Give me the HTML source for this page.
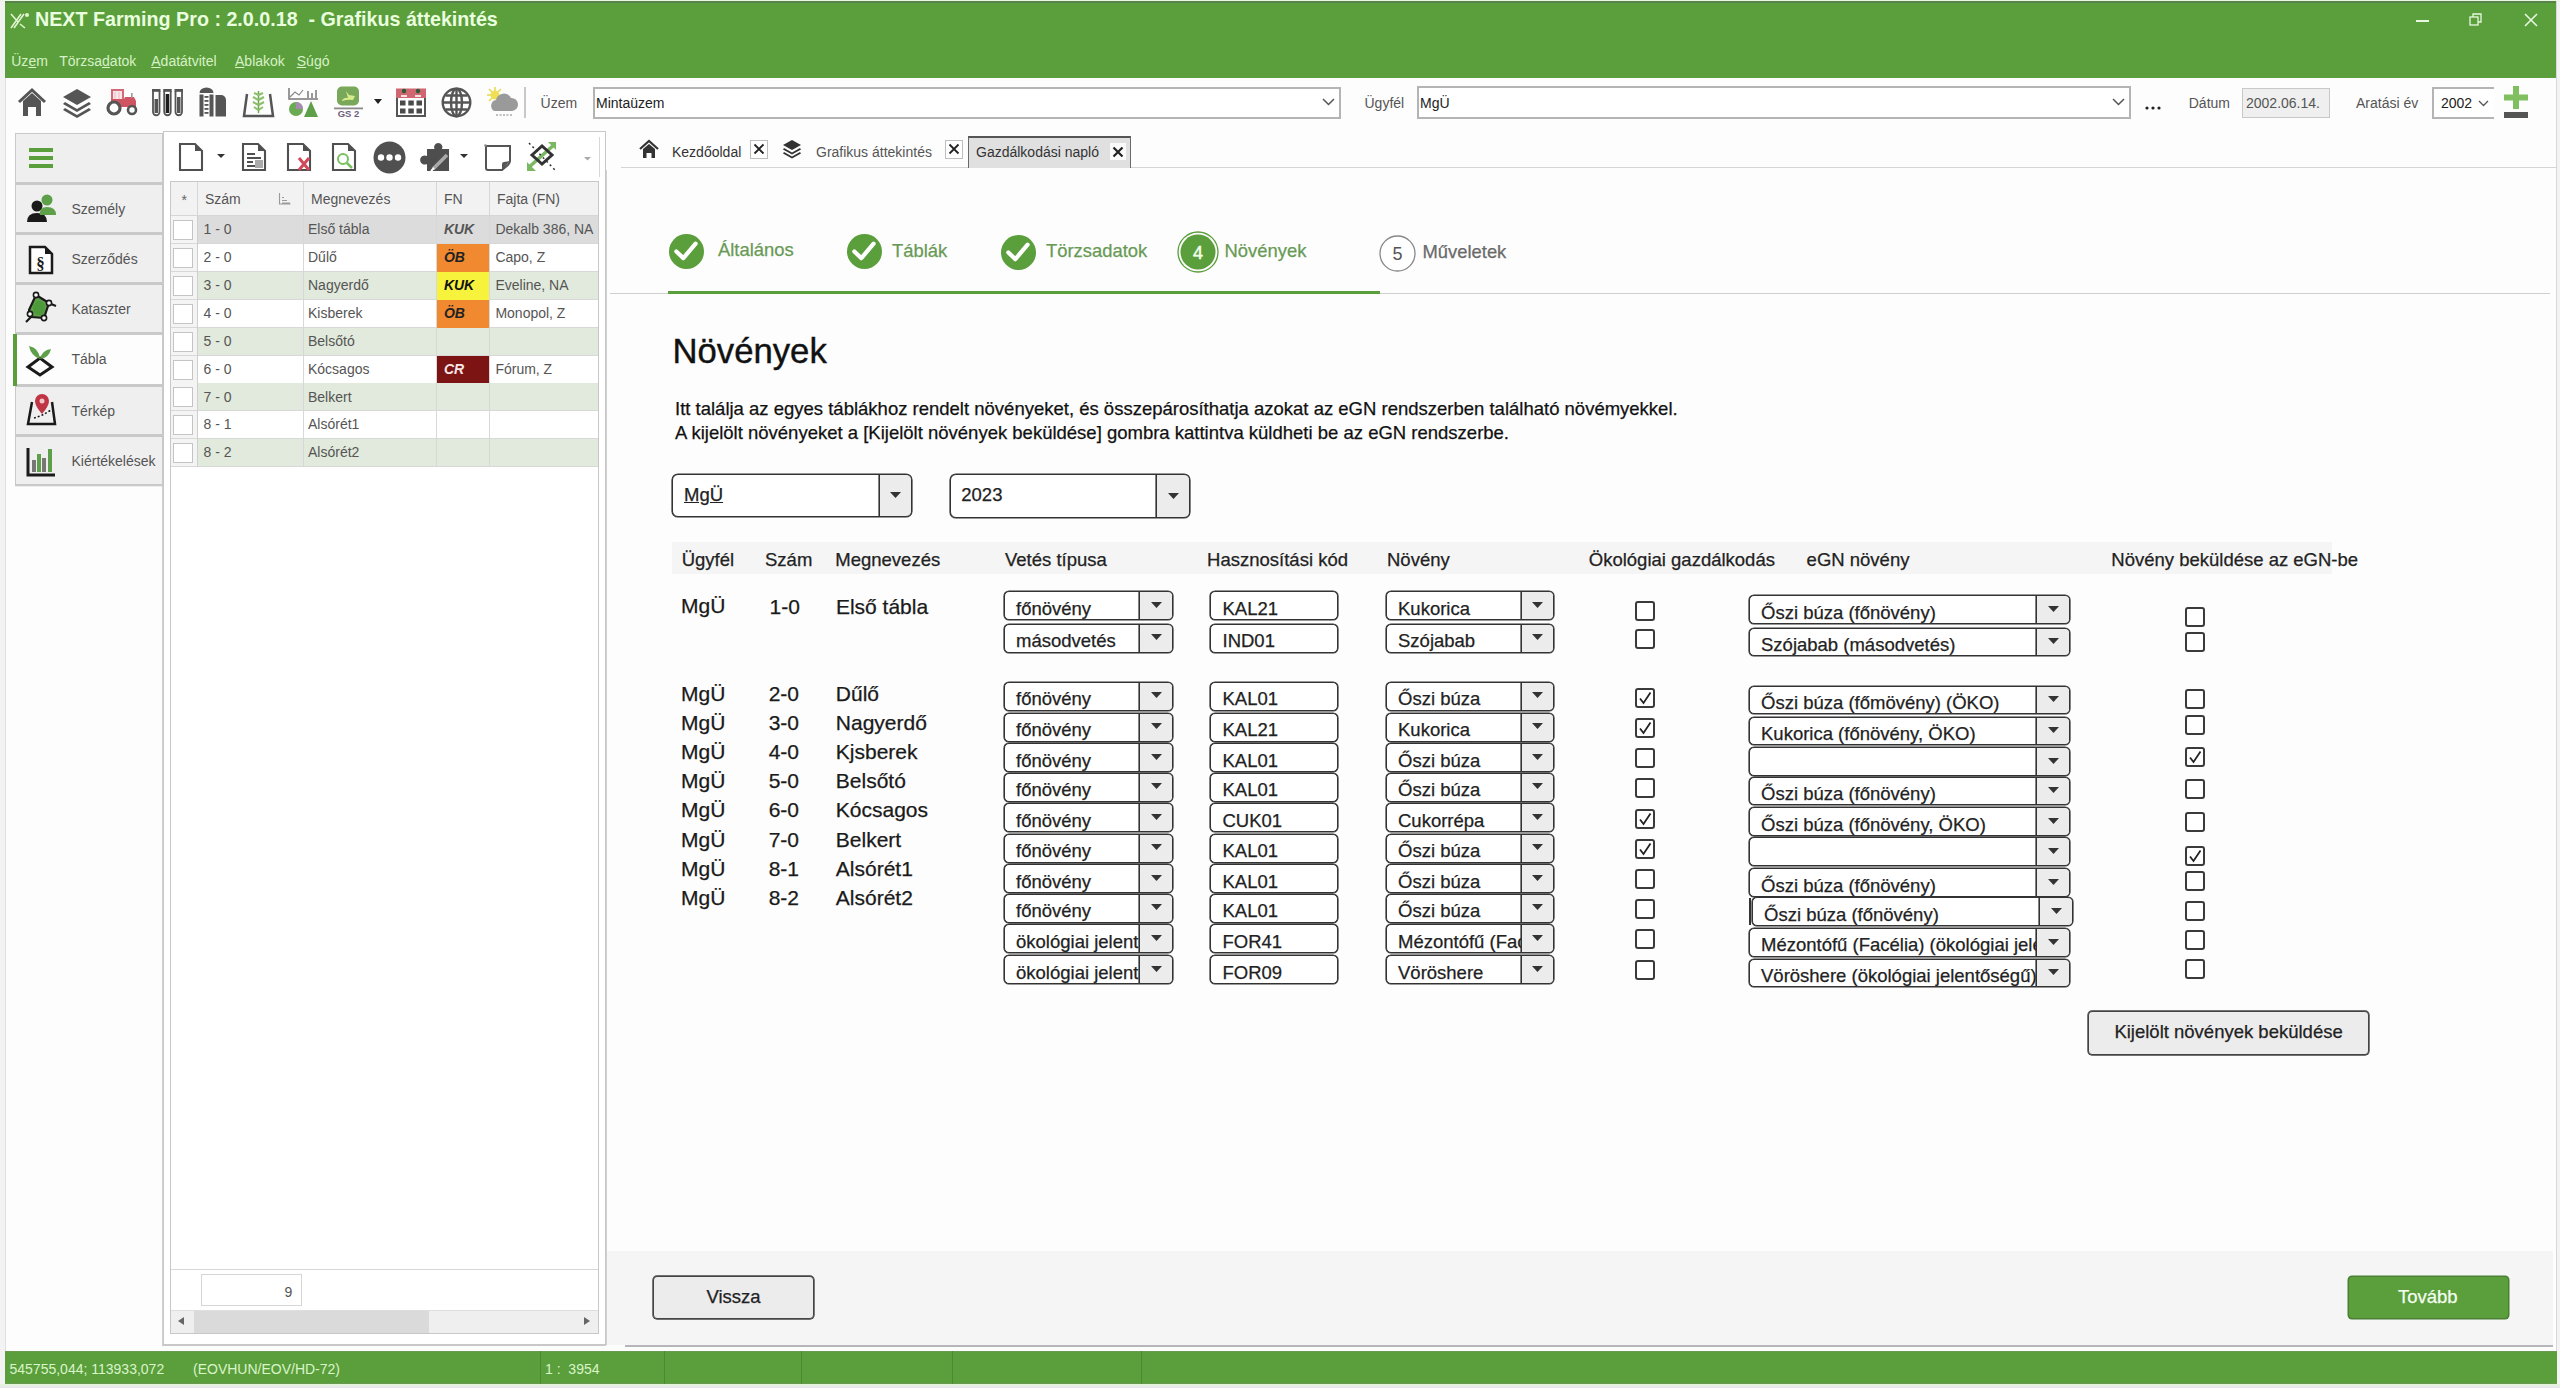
<!DOCTYPE html>
<html><head><meta charset="utf-8"><style>
html,body{margin:0;padding:0;width:2560px;height:1388px;overflow:hidden;background:#fdfdfd;position:relative}
.t{position:absolute;white-space:pre;line-height:1;font-family:"Liberation Sans",sans-serif}
.h{-webkit-text-stroke:0.25px currentColor}
svg{overflow:visible}
</style></head><body>
<div style="position:absolute;left:0px;top:0px;width:6px;height:1388px;background:#f3f3f3"></div>
<div style="position:absolute;left:5px;top:0px;width:1px;height:1388px;background:#e0e0e0"></div>
<div style="position:absolute;left:2556px;top:0px;width:4px;height:1388px;background:#f3f3f3"></div>
<div style="position:absolute;left:2556px;top:0px;width:1px;height:1388px;background:#d8d8d8"></div>
<div style="position:absolute;left:0px;top:0px;width:2560px;height:1px;background:#eaf8e2"></div>
<div style="position:absolute;left:5px;top:1px;width:2551px;height:77px;background:#5b9e3c;border-top:2px solid #57824a;box-sizing:border-box"></div>
<svg style="position:absolute;left:9px;top:11px" width="22" height="18" viewBox="0 0 22 18"><path d="M2 17 L12 3 M5 17 L15 3 M2 3 L9 11 M11 13 L16 17" stroke="#dff5d0" stroke-width="1.6" fill="none"/><circle cx="18" cy="4" r="2" fill="#dff5d0"/></svg>
<div class="t " style="left:35px;top:9.62px;font-size:19.7px;color:#eaffdf;font-weight:700;">NEXT Farming Pro : 2.0.0.18&nbsp; - Grafikus áttekintés</div>
<div class="t " style="left:11.25px;top:53.65px;font-size:14px;color:#d6f2c6;font-weight:400;">Üz<u>e</u>m</div>
<div class="t " style="left:59.25px;top:53.65px;font-size:14px;color:#d6f2c6;font-weight:400;">Törzsa<u>d</u>atok</div>
<div class="t " style="left:151.25px;top:53.65px;font-size:14px;color:#d6f2c6;font-weight:400;"><u>A</u>datátvitel</div>
<div class="t " style="left:235px;top:53.65px;font-size:14px;color:#d6f2c6;font-weight:400;"><u>A</u>blakok</div>
<div class="t " style="left:296.75px;top:53.65px;font-size:14px;color:#d6f2c6;font-weight:400;"><u>S</u>úgó</div>
<div style="position:absolute;left:2416px;top:20px;width:13px;height:1.5px;background:#e8f8e0"></div>
<svg style="position:absolute;left:2469px;top:13px" width="14" height="14" viewBox="0 0 14 14"><rect x="1" y="4" width="8" height="8" fill="none" stroke="#e8f8e0" stroke-width="1.3"/><path d="M4 4 V1 H12 V9 H9" fill="none" stroke="#e8f8e0" stroke-width="1.3"/></svg>
<svg style="position:absolute;left:2524px;top:13px" width="14" height="14" viewBox="0 0 14 14"><path d="M1 1 L13 13 M13 1 L1 13" stroke="#e8f8e0" stroke-width="1.6"/></svg>
<svg style="position:absolute;left:17px;top:87px" width="30" height="30" viewBox="0 0 30 30"><path d="M2 15 L15 3 L28 15" fill="none" stroke="#555" stroke-width="3"/><path d="M6 14 L15 6 L24 14 V29 H19 V20 H11 V29 H6 Z" fill="#555"/></svg>
<svg style="position:absolute;left:62px;top:88px" width="30" height="30" viewBox="0 0 30 30"><path d="M15 1 L29 9 L15 17 L1 9 Z" fill="#555"/><path d="M3 14 L15 21 L27 14 L29 16 L15 24 L1 16 Z" fill="#555"/><path d="M3 20 L15 27 L27 20 L29 22 L15 30 L1 22 Z" fill="#555"/></svg>
<svg style="position:absolute;left:106px;top:88px" width="32" height="28" viewBox="0 0 32 28"><path d="M6 2 H17 V12 H6 Z" fill="#f8e6e8" stroke="#d46a76" stroke-width="2"/><path d="M9 4 V11 M13 4 V11" stroke="#f3c9ce" stroke-width="1.5"/><path d="M5 11 H18 L19 9 H28 L30 13 V19 H5Z" fill="#cf5563"/><rect x="25" y="5" width="1.6" height="5" fill="#999"/><circle cx="8" cy="20" r="6" fill="#fff" stroke="#555" stroke-width="3.2"/><circle cx="26" cy="22" r="4" fill="#fff" stroke="#555" stroke-width="2.6"/></svg>
<svg style="position:absolute;left:151px;top:88px" width="33" height="29" viewBox="0 0 33 29"><g fill="#555"><rect x="1" y="1" width="8.5" height="2.8"/><rect x="12.2" y="1" width="8.5" height="2.8"/><rect x="23.5" y="1" width="8.5" height="2.8"/></g><g fill="none" stroke="#555" stroke-width="1.8"><path d="M2 3 V24 A3.2 3.2 0 0 0 8.5 24 V3"/><path d="M13.2 3 V24 A3.2 3.2 0 0 0 19.7 24 V3"/><path d="M24.5 3 V24 A3.2 3.2 0 0 0 31 24 V3"/></g><rect x="3.5" y="11" width="3.5" height="14" fill="#555"/><rect x="14.7" y="6" width="3.5" height="19" fill="#1e1e1e"/><rect x="26" y="9" width="3.5" height="16" fill="#555"/></svg>
<svg style="position:absolute;left:199px;top:87px" width="28" height="30" viewBox="0 0 28 30"><path d="M0.5 6 A7 5.5 0 0 1 14.5 6 Z" fill="#555"/><rect x="0.5" y="7.5" width="4" height="22" fill="#555"/><rect x="10.5" y="7.5" width="4" height="22" fill="#555"/><g fill="#555"><rect x="5.5" y="9" width="4" height="1.8"/><rect x="5.5" y="13" width="4" height="1.8"/><rect x="5.5" y="17" width="4" height="1.8"/><rect x="5.5" y="21" width="4" height="1.8"/><rect x="5.5" y="25" width="4" height="1.8"/></g><path d="M16.5 8 H22 A5 5 0 0 1 27 13 V29.5 H16.5Z" fill="#555"/></svg>
<svg style="position:absolute;left:243px;top:87px" width="31" height="30" viewBox="0 0 31 30"><path d="M4 7 L1 29 H30 L27 7" fill="none" stroke="#555" stroke-width="2.5"/><path d="M15.5 4 V26" stroke="#6aa84f" stroke-width="1.5"/><path d="M15.5 8 L11 6 M15.5 8 L20 6 M15.5 13 L10 10 M15.5 13 L21 10 M15.5 18 L10 15 M15.5 18 L21 15 M15.5 23 L11 20 M15.5 23 L20 20" stroke="#8bbf6a" stroke-width="2"/></svg>
<svg style="position:absolute;left:288px;top:87px" width="31" height="31" viewBox="0 0 31 31"><path d="M1 1 V12 H30" fill="none" stroke="#777" stroke-width="1.5"/><path d="M2 10 L7 5 L11 8 L15 3" fill="none" stroke="#888" stroke-width="1.2"/><rect x="19" y="4" width="2" height="8" fill="#999"/><rect x="23" y="6" width="2" height="6" fill="#999"/><rect x="27" y="3" width="2" height="9" fill="#999"/><circle cx="8" cy="22" r="7" fill="#6aaa52"/><path d="M8 22 V15 A7 7 0 0 1 15 22Z" fill="#a88bb0"/><path d="M23 14 L30 30 H16Z" fill="#5ea04a"/></svg>
<svg style="position:absolute;left:333px;top:86px" width="32" height="33" viewBox="0 0 32 33"><rect x="4" y="0.5" width="22" height="19" rx="5" fill="#7aa85a"/><path d="M9 14 Q12 11 15 12 L13 5 L16 9 L22 10 L20 14 Q15 13 9 15Z" fill="#d7eb8a"/><rect x="1" y="21.5" width="29" height="1.8" fill="#8a8a8a"/><text x="15.5" y="31" font-family="Liberation Sans" font-size="9.5" font-weight="700" text-anchor="middle" fill="#6d5f7d">GS 2</text></svg>
<svg style="position:absolute;left:374px;top:99px" width="8" height="5" viewBox="0 0 8 5"><path d="M0 0 H8 L4 5Z" fill="#222"/></svg>
<svg style="position:absolute;left:395px;top:86px" width="32" height="32" viewBox="0 0 32 32"><rect x="2" y="4" width="28" height="26" fill="#fff" stroke="#555" stroke-width="2"/><rect x="1" y="2.5" width="30" height="9.5" fill="#cf6670"/><rect x="6" y="9" width="6" height="2" fill="#f6e0e2"/><rect x="20" y="9" width="6" height="2" fill="#f6e0e2"/><circle cx="9" cy="5" r="2.2" fill="#2f5a3a"/><circle cx="23" cy="5" r="2.2" fill="#2f5a3a"/><g fill="#4a4a4a"><rect x="5" y="14.5" width="5.5" height="5"/><rect x="13.3" y="14.5" width="5.5" height="5"/><rect x="21.5" y="14.5" width="5.5" height="5"/><rect x="5" y="22.5" width="5.5" height="5"/><rect x="13.3" y="22.5" width="5.5" height="5"/><rect x="21.5" y="22.5" width="5.5" height="5"/></g></svg>
<svg style="position:absolute;left:441px;top:87px" width="31" height="31" viewBox="0 0 31 31"><g fill="none" stroke="#555" stroke-width="2.4"><circle cx="15.5" cy="15.5" r="13.8"/><ellipse cx="15.5" cy="15.5" rx="5.5" ry="13.8"/><path d="M15.5 2 V29 M2 15.5 H29 M4.5 8.5 H26.5 M4.5 22.5 H26.5"/></g></svg>
<svg style="position:absolute;left:486px;top:86px" width="31" height="32" viewBox="0 0 31 32"><g stroke="#e8d84a" stroke-width="1.5"><path d="M9 1 V5 M1 9 H5 M3 3 L6 6 M15 3 L12 6 M3 15 L6 12"/></g><circle cx="9" cy="9" r="4.5" fill="#eedf55"/><path d="M8 25 A6 6 0 0 1 10 14 A8 8 0 0 1 25 12 A6 6 0 0 1 26 25 Z" fill="#9a9a9a"/><path d="M10 29 H26" stroke="#aaa" stroke-width="1.5" stroke-dasharray="2 1.5"/></svg>
<div style="position:absolute;left:524px;top:87px;width:2px;height:31px;background:#c8c8c8"></div>
<div class="t " style="left:540.6px;top:95.55px;font-size:14px;color:#555;font-weight:400;">Üzem</div>
<div style="position:absolute;left:593px;top:87px;width:748px;height:32px;border:2px solid #b4b4b4;box-sizing:border-box;background:#fff"></div>
<div class="t " style="left:596px;top:95.55px;font-size:14px;color:#222;font-weight:400;">Mintaüzem</div>
<svg style="position:absolute;left:1322px;top:98px" width="13" height="8" viewBox="0 0 13 8"><path d="M1 1 L6.5 6.5 L12 1" fill="none" stroke="#555" stroke-width="1.5"/></svg>
<div class="t " style="left:1364.5px;top:95.55px;font-size:14px;color:#555;font-weight:400;">Ügyfél</div>
<div style="position:absolute;left:1417px;top:86px;width:714px;height:33px;border:2px solid #b4b4b4;box-sizing:border-box;background:#fff"></div>
<div class="t " style="left:1420px;top:95.55px;font-size:14px;color:#222;font-weight:400;">MgÜ</div>
<svg style="position:absolute;left:2112px;top:98px" width="13" height="8" viewBox="0 0 13 8"><path d="M1 1 L6.5 6.5 L12 1" fill="none" stroke="#555" stroke-width="1.5"/></svg>
<svg style="position:absolute;left:2145px;top:106px" width="16" height="4" viewBox="0 0 16 4"><circle cx="2" cy="2" r="1.6" fill="#222"/><circle cx="8" cy="2" r="1.6" fill="#222"/><circle cx="14" cy="2" r="1.6" fill="#222"/></svg>
<div class="t " style="left:2188.75px;top:95.55px;font-size:14px;color:#555;font-weight:400;">Dátum</div>
<div style="position:absolute;left:2242px;top:88px;width:88px;height:30px;border:1px solid #c8c8c8;box-sizing:border-box;background:#efefef"></div>
<div class="t " style="left:2246px;top:95.55px;font-size:14px;color:#555;font-weight:400;">2002.06.14.</div>
<div class="t " style="left:2356px;top:95.55px;font-size:14px;color:#555;font-weight:400;">Aratási év</div>
<div style="position:absolute;left:2432px;top:87px;width:62px;height:32px;border:2px solid #b4b4b4;border-right:none;box-sizing:border-box;background:#fff"></div>
<div class="t " style="left:2441px;top:95.55px;font-size:14px;color:#222;font-weight:400;">2002</div>
<svg style="position:absolute;left:2478px;top:100px" width="11" height="7" viewBox="0 0 11 7"><path d="M1 1 L5.5 5.5 L10 1" fill="none" stroke="#555" stroke-width="1.3"/></svg>
<svg style="position:absolute;left:2503px;top:85px" width="26" height="34" viewBox="0 0 26 34"><path d="M13 1 V24 M1 12.5 H25" stroke="#7fbf60" stroke-width="6"/><rect x="1" y="27" width="24" height="6" fill="#555"/></svg>
<div style="position:absolute;left:15px;top:133px;width:148px;height:354px;background:#efefef"></div>
<div style="position:absolute;left:15px;top:133px;width:148px;height:51px;background:#efefef;border:1px solid #c9c9c9;border-bottom:2px solid #c9c9c9;box-sizing:border-box"></div>
<div style="position:absolute;left:15px;top:184px;width:148px;height:50px;background:#efefef;border:1px solid #c9c9c9;border-bottom:2px solid #c9c9c9;box-sizing:border-box"></div>
<div class="t " style="left:71.5px;top:201.65px;font-size:14px;color:#555;font-weight:400;">Személy</div>
<div style="position:absolute;left:15px;top:234px;width:148px;height:50px;background:#efefef;border:1px solid #c9c9c9;border-bottom:2px solid #c9c9c9;box-sizing:border-box"></div>
<div class="t " style="left:71.5px;top:251.65px;font-size:14px;color:#555;font-weight:400;">Szerződés</div>
<div style="position:absolute;left:15px;top:284px;width:148px;height:50px;background:#efefef;border:1px solid #c9c9c9;border-bottom:2px solid #c9c9c9;box-sizing:border-box"></div>
<div class="t " style="left:71.5px;top:301.65px;font-size:14px;color:#555;font-weight:400;">Kataszter</div>
<div style="position:absolute;left:15px;top:334px;width:148px;height:52px;background:#fdfdfd;border:1px solid #c9c9c9;border-bottom:2px solid #c9c9c9;box-sizing:border-box"></div>
<div class="t " style="left:71.5px;top:351.65px;font-size:14px;color:#555;font-weight:400;">Tábla</div>
<div style="position:absolute;left:15px;top:386px;width:148px;height:50px;background:#efefef;border:1px solid #c9c9c9;border-bottom:2px solid #c9c9c9;box-sizing:border-box"></div>
<div class="t " style="left:71.5px;top:403.65px;font-size:14px;color:#555;font-weight:400;">Térkép</div>
<div style="position:absolute;left:15px;top:436px;width:148px;height:50px;background:#efefef;border:1px solid #c9c9c9;border-bottom:2px solid #c9c9c9;box-sizing:border-box"></div>
<div class="t " style="left:71.5px;top:453.65px;font-size:14px;color:#555;font-weight:400;">Kiértékelések</div>
<div style="position:absolute;left:13px;top:334px;width:4px;height:52px;background:#5b9e3c"></div>
<div style="position:absolute;left:29px;top:148px;width:24px;height:4px;background:#5b9e3c"></div>
<div style="position:absolute;left:29px;top:156px;width:24px;height:4px;background:#5b9e3c"></div>
<div style="position:absolute;left:29px;top:164px;width:24px;height:4px;background:#5b9e3c"></div>
<svg style="position:absolute;left:26px;top:193px" width="31" height="30" viewBox="0 0 31 30"><circle cx="11" cy="13" r="5.5" fill="#1a1a1a"/><path d="M1 29 Q1 20 11 20 Q21 20 21 29Z" fill="#1a1a1a"/><circle cx="21" cy="7" r="5.5" fill="#5ea04a"/><path d="M14 22 Q13 14 21 14 Q30 14 30 22Z" fill="#5ea04a"/></svg>
<svg style="position:absolute;left:28px;top:245px" width="26" height="30" viewBox="0 0 26 30"><path d="M2 2 H17 L24 9 V28 H2 Z" fill="#fff" stroke="#1a1a1a" stroke-width="2.5"/><path d="M17 2 L24 9 H17Z" fill="#1a1a1a"/><text x="12.5" y="24" font-family="Liberation Serif" font-size="17" font-weight="700" text-anchor="middle" fill="#1a1a1a">§</text></svg>
<svg style="position:absolute;left:24px;top:291px" width="34" height="34" viewBox="0 0 34 34"><path d="M2 31 L7 26 M27 13 L32 15" stroke="#1a1a1a" stroke-width="2.2"/><path d="M12 4 L25 12 L20 27 L7 26 L5 19Z" fill="#5ea04a" stroke="#1a1a1a" stroke-width="2.2" stroke-linejoin="round"/><ellipse cx="15" cy="17" rx="6" ry="7" fill="#4c9a3a"/><g fill="#fff" stroke="#1a1a1a" stroke-width="1.6"><circle cx="12" cy="4" r="2.6"/><circle cx="25" cy="12" r="2.6"/><circle cx="20" cy="27" r="2.6"/><circle cx="6" cy="23" r="2.6"/></g></svg>
<svg style="position:absolute;left:25px;top:344px" width="30" height="32" viewBox="0 0 30 32"><path d="M3 23 L15 14 L27 23 L15 31 Z" fill="none" stroke="#1a1a1a" stroke-width="3"/><path d="M15 15 Q6 12 4 2 Q14 4 15 15Z" fill="#5ea04a"/><path d="M15 15 Q17 6 26 5 Q24 14 15 15Z" fill="#5ea04a"/></svg>
<svg style="position:absolute;left:26px;top:394px" width="30" height="32" viewBox="0 0 30 32"><path d="M6 8 L2 30 H29 L26 8" fill="none" stroke="#1a1a1a" stroke-width="2.5"/><path d="M8 24 Q16 22 25 16" fill="none" stroke="#1a1a1a" stroke-width="1.5" stroke-dasharray="2 2"/><path d="M16 20 Q9 12 9 7 A7 7 0 0 1 23 7 Q23 12 16 20Z" fill="#c03545"/><circle cx="16" cy="7" r="2.5" fill="#f2c4c8"/></svg>
<svg style="position:absolute;left:26px;top:446px" width="30" height="32" viewBox="0 0 30 32"><path d="M2 2 V29 H29" fill="none" stroke="#1a1a1a" stroke-width="3"/><rect x="6" y="14" width="4" height="12" fill="#777"/><rect x="11" y="8" width="4" height="18" fill="#5ea04a"/><rect x="16" y="12" width="4" height="14" fill="#777"/><rect x="22" y="3" width="4" height="23" fill="#5ea04a"/></svg>
<div style="position:absolute;left:162px;top:486px;width:1px;height:860px;background:#d0d0d0"></div>
<div style="position:absolute;left:163px;top:131px;width:443px;height:1215px;border:1px solid #c8c8c8;border-bottom:2px solid #c8c8c8;box-sizing:border-box;background:#fff"></div>
<svg style="position:absolute;left:178px;top:142px" width="26" height="30" viewBox="0 0 26 30"><path d="M2 2 H17 L24 9 V28 H2 Z" fill="#fff" stroke="#505050" stroke-width="2.1"/><path d="M17 2 L24 9 H17Z" fill="#505050"/></svg>
<svg style="position:absolute;left:216px;top:153px" width="10" height="6" viewBox="0 0 10 6"><path d="M1 1 H9 L5 5Z" fill="#333"/></svg>
<svg style="position:absolute;left:241px;top:142px" width="26" height="30" viewBox="0 0 26 30"><path d="M2 2 H17 L24 9 V28 H2 Z" fill="#fff" stroke="#505050" stroke-width="2.1"/><path d="M17 2 L24 9 H17Z" fill="#505050"/><path d="M6 12 H14 M6 16 H20 M6 20 H12 M6 24 H18" stroke="#505050" stroke-width="2"/><rect x="14" y="18" width="8" height="8" fill="#aaa"/></svg>
<svg style="position:absolute;left:286px;top:142px" width="26" height="30" viewBox="0 0 26 30"><path d="M2 2 H17 L24 9 V28 H2 Z" fill="#fff" stroke="#505050" stroke-width="2.1"/><path d="M17 2 L24 9 H17Z" fill="#505050"/><path d="M13 16 L23 28 M23 16 L13 28" stroke="#d04a5a" stroke-width="3"/></svg>
<svg style="position:absolute;left:331px;top:142px" width="26" height="30" viewBox="0 0 26 30"><path d="M2 2 H17 L24 9 V28 H2 Z" fill="#fff" stroke="#505050" stroke-width="2.1"/><path d="M17 2 L24 9 H17Z" fill="#505050"/><circle cx="12" cy="17" r="5" fill="none" stroke="#7ac060" stroke-width="2"/><path d="M16 21 L21 26" stroke="#7ac060" stroke-width="2.5"/></svg>
<svg style="position:absolute;left:373px;top:141px" width="33" height="33" viewBox="0 0 33 33"><circle cx="16.5" cy="16.5" r="16" fill="#505050"/><circle cx="8" cy="16.5" r="3.2" fill="#fff"/><circle cx="16.5" cy="16.5" r="3.2" fill="#fff"/><circle cx="25" cy="16.5" r="3.2" fill="#fff"/></svg>
<svg style="position:absolute;left:418px;top:140px" width="34" height="34" viewBox="0 0 34 34"><path d="M9 9 H16.5 A4.2 4.2 0 1 1 24 9 H31 V31 H9 V24 A4.6 4.6 0 1 1 9 16 Z" fill="#4e4e4e"/><path d="M15 29 L29 15" stroke="#aaa" stroke-width="3.5"/><path d="M13 31 L16 28" stroke="#fff" stroke-width="2"/></svg>
<svg style="position:absolute;left:459px;top:153px" width="10" height="6" viewBox="0 0 10 6"><path d="M1 1 H9 L5 5Z" fill="#333"/></svg>
<svg style="position:absolute;left:483px;top:143px" width="30" height="29" viewBox="0 0 30 29"><path d="M3 3 H27 V18 Q27 20 25 22 L19 27 H5 Q3 27 3 25 Z" fill="#fff" stroke="#555" stroke-width="2"/><path d="M27 18 L19 27 V21 Q19 19 21 19 Z" fill="#555"/><circle cx="2.5" cy="2.5" r="1.3" fill="#888"/></svg>
<svg style="position:absolute;left:526px;top:140px" width="31" height="33" viewBox="0 0 31 33"><path d="M2 28 L29 4" stroke="#7ab862" stroke-width="3.5"/><path d="M22 2 H30 V10Z M1 22 V31 H10Z" fill="#7ab862"/><path d="M6 15 L16 6 L26 15 L16 24Z" fill="none" stroke="#333" stroke-width="3"/><path d="M3 3 L29 30" stroke="#333" stroke-width="1.5" stroke-dasharray="2 3"/></svg>
<svg style="position:absolute;left:583px;top:156px" width="9" height="5" viewBox="0 0 9 5"><path d="M1 1 H8 L4.5 4.5Z" fill="#aaa"/></svg>
<div style="position:absolute;left:599px;top:137px;width:1px;height:40px;background:#d8d8d8"></div>
<div style="position:absolute;left:170px;top:181px;width:429px;height:1153px;border:1px solid #c8c8c8;box-sizing:border-box;background:#fff"></div>
<div style="position:absolute;left:171px;top:182px;width:427px;height:34px;background:#f2f2f2;border-bottom:1px solid #d6d6d6;box-sizing:border-box"></div>
<div style="position:absolute;left:196.5px;top:182px;width:1px;height:34px;background:#d6d6d6"></div>
<div style="position:absolute;left:302.5px;top:182px;width:1px;height:34px;background:#d6d6d6"></div>
<div style="position:absolute;left:435.5px;top:182px;width:1px;height:34px;background:#d6d6d6"></div>
<div style="position:absolute;left:488.5px;top:182px;width:1px;height:34px;background:#d6d6d6"></div>
<div class="t " style="left:181.6px;top:193.15px;font-size:14px;color:#666;font-weight:400;">*</div>
<div class="t " style="left:204.9px;top:192.15px;font-size:14px;color:#555;font-weight:400;">Szám</div>
<svg style="position:absolute;left:278px;top:192px" width="13" height="13" viewBox="0 0 13 13"><path d="M1.5 1 V12 H12.5 M4 5.5 H6 M4 8.5 H9 M4 11 H12" fill="none" stroke="#9a9a9a" stroke-width="1.1"/></svg>
<div class="t " style="left:311px;top:192.15px;font-size:14px;color:#555;font-weight:400;">Megnevezés</div>
<div class="t " style="left:443.9px;top:192.15px;font-size:14px;color:#555;font-weight:400;">FN</div>
<div class="t " style="left:497px;top:192.15px;font-size:14px;color:#555;font-weight:400;">Fajta (FN)</div>
<div style="position:absolute;left:197px;top:216px;width:401px;height:28px;background:#dcdcdc;border-bottom:1px solid #d8d8d8;box-sizing:border-box"></div>
<div style="position:absolute;left:171px;top:216px;width:26px;height:28px;background:#f4f4f4;border-bottom:1px solid #d8d8d8;box-sizing:border-box"></div>
<div style="position:absolute;left:173px;top:220px;width:20px;height:20px;border:1px solid #c4c4c4;background:#fff;box-sizing:border-box"></div>
<div style="position:absolute;left:437px;top:216px;width:52px;height:28px;background:transparent"></div>
<div class="t " style="left:203.6px;top:222.15px;font-size:14px;color:#555;font-weight:400;">1 - 0</div>
<div class="t " style="left:308px;top:222.15px;font-size:14px;color:#555;font-weight:400;">Első tábla</div>
<div class="t " style="left:443.9px;top:222.15px;font-size:14px;color:#555;font-weight:700;font-style:italic;">KUK</div>
<div class="t " style="left:495.4px;top:222.15px;font-size:14px;color:#555;font-weight:400;">Dekalb 386, NA</div>
<div style="position:absolute;left:302.5px;top:216px;width:1px;height:28px;background:#d8d8d8"></div>
<div style="position:absolute;left:435.5px;top:216px;width:1px;height:28px;background:#d8d8d8"></div>
<div style="position:absolute;left:488.5px;top:216px;width:1px;height:28px;background:#d8d8d8"></div>
<div style="position:absolute;left:197px;top:244px;width:401px;height:28px;background:#fff;border-bottom:1px solid #d8d8d8;box-sizing:border-box"></div>
<div style="position:absolute;left:171px;top:244px;width:26px;height:28px;background:#f4f4f4;border-bottom:1px solid #d8d8d8;box-sizing:border-box"></div>
<div style="position:absolute;left:173px;top:248px;width:20px;height:20px;border:1px solid #c4c4c4;background:#fff;box-sizing:border-box"></div>
<div style="position:absolute;left:437px;top:244px;width:52px;height:28px;background:#f0892f"></div>
<div class="t " style="left:203.6px;top:250.05px;font-size:14px;color:#555;font-weight:400;">2 - 0</div>
<div class="t " style="left:308px;top:250.05px;font-size:14px;color:#555;font-weight:400;">Dűlő</div>
<div class="t " style="left:443.9px;top:250.05px;font-size:14px;color:#222;font-weight:700;font-style:italic;">ÖB</div>
<div class="t " style="left:495.4px;top:250.05px;font-size:14px;color:#555;font-weight:400;">Capo, Z</div>
<div style="position:absolute;left:302.5px;top:244px;width:1px;height:28px;background:#d8d8d8"></div>
<div style="position:absolute;left:435.5px;top:244px;width:1px;height:28px;background:#d8d8d8"></div>
<div style="position:absolute;left:488.5px;top:244px;width:1px;height:28px;background:#d8d8d8"></div>
<div style="position:absolute;left:197px;top:272px;width:401px;height:28px;background:#e1eadc;border-bottom:1px solid #d8d8d8;box-sizing:border-box"></div>
<div style="position:absolute;left:171px;top:272px;width:26px;height:28px;background:#f4f4f4;border-bottom:1px solid #d8d8d8;box-sizing:border-box"></div>
<div style="position:absolute;left:173px;top:276px;width:20px;height:20px;border:1px solid #c4c4c4;background:#fff;box-sizing:border-box"></div>
<div style="position:absolute;left:437px;top:272px;width:52px;height:28px;background:#f7f33c"></div>
<div class="t " style="left:203.6px;top:277.95px;font-size:14px;color:#555;font-weight:400;">3 - 0</div>
<div class="t " style="left:308px;top:277.95px;font-size:14px;color:#555;font-weight:400;">Nagyerdő</div>
<div class="t " style="left:443.9px;top:277.95px;font-size:14px;color:#111;font-weight:700;font-style:italic;">KUK</div>
<div class="t " style="left:495.4px;top:277.95px;font-size:14px;color:#555;font-weight:400;">Eveline, NA</div>
<div style="position:absolute;left:302.5px;top:272px;width:1px;height:28px;background:#d8d8d8"></div>
<div style="position:absolute;left:435.5px;top:272px;width:1px;height:28px;background:#d8d8d8"></div>
<div style="position:absolute;left:488.5px;top:272px;width:1px;height:28px;background:#d8d8d8"></div>
<div style="position:absolute;left:197px;top:300px;width:401px;height:28px;background:#fff;border-bottom:1px solid #d8d8d8;box-sizing:border-box"></div>
<div style="position:absolute;left:171px;top:300px;width:26px;height:28px;background:#f4f4f4;border-bottom:1px solid #d8d8d8;box-sizing:border-box"></div>
<div style="position:absolute;left:173px;top:304px;width:20px;height:20px;border:1px solid #c4c4c4;background:#fff;box-sizing:border-box"></div>
<div style="position:absolute;left:437px;top:300px;width:52px;height:28px;background:#f0892f"></div>
<div class="t " style="left:203.6px;top:305.85px;font-size:14px;color:#555;font-weight:400;">4 - 0</div>
<div class="t " style="left:308px;top:305.85px;font-size:14px;color:#555;font-weight:400;">Kisberek</div>
<div class="t " style="left:443.9px;top:305.85px;font-size:14px;color:#222;font-weight:700;font-style:italic;">ÖB</div>
<div class="t " style="left:495.4px;top:305.85px;font-size:14px;color:#555;font-weight:400;">Monopol, Z</div>
<div style="position:absolute;left:302.5px;top:300px;width:1px;height:28px;background:#d8d8d8"></div>
<div style="position:absolute;left:435.5px;top:300px;width:1px;height:28px;background:#d8d8d8"></div>
<div style="position:absolute;left:488.5px;top:300px;width:1px;height:28px;background:#d8d8d8"></div>
<div style="position:absolute;left:197px;top:328px;width:401px;height:28px;background:#e1eadc;border-bottom:1px solid #d8d8d8;box-sizing:border-box"></div>
<div style="position:absolute;left:171px;top:328px;width:26px;height:28px;background:#f4f4f4;border-bottom:1px solid #d8d8d8;box-sizing:border-box"></div>
<div style="position:absolute;left:173px;top:332px;width:20px;height:20px;border:1px solid #c4c4c4;background:#fff;box-sizing:border-box"></div>
<div class="t " style="left:203.6px;top:333.75px;font-size:14px;color:#555;font-weight:400;">5 - 0</div>
<div class="t " style="left:308px;top:333.75px;font-size:14px;color:#555;font-weight:400;">Belsőtó</div>
<div style="position:absolute;left:302.5px;top:328px;width:1px;height:28px;background:#d8d8d8"></div>
<div style="position:absolute;left:435.5px;top:328px;width:1px;height:28px;background:#d8d8d8"></div>
<div style="position:absolute;left:488.5px;top:328px;width:1px;height:28px;background:#d8d8d8"></div>
<div style="position:absolute;left:197px;top:356px;width:401px;height:28px;background:#fff;border-bottom:1px solid #d8d8d8;box-sizing:border-box"></div>
<div style="position:absolute;left:171px;top:356px;width:26px;height:28px;background:#f4f4f4;border-bottom:1px solid #d8d8d8;box-sizing:border-box"></div>
<div style="position:absolute;left:173px;top:360px;width:20px;height:20px;border:1px solid #c4c4c4;background:#fff;box-sizing:border-box"></div>
<div style="position:absolute;left:437px;top:356px;width:52px;height:27px;background:#7d1414"></div>
<div class="t " style="left:203.6px;top:361.65px;font-size:14px;color:#555;font-weight:400;">6 - 0</div>
<div class="t " style="left:308px;top:361.65px;font-size:14px;color:#555;font-weight:400;">Kócsagos</div>
<div class="t " style="left:443.9px;top:361.65px;font-size:14px;color:#f6e6e6;font-weight:700;font-style:italic;">CR</div>
<div class="t " style="left:495.4px;top:361.65px;font-size:14px;color:#555;font-weight:400;">Fórum, Z</div>
<div style="position:absolute;left:302.5px;top:356px;width:1px;height:28px;background:#d8d8d8"></div>
<div style="position:absolute;left:435.5px;top:356px;width:1px;height:28px;background:#d8d8d8"></div>
<div style="position:absolute;left:488.5px;top:356px;width:1px;height:28px;background:#d8d8d8"></div>
<div style="position:absolute;left:197px;top:383px;width:401px;height:28px;background:#e1eadc;border-bottom:1px solid #d8d8d8;box-sizing:border-box"></div>
<div style="position:absolute;left:171px;top:383px;width:26px;height:28px;background:#f4f4f4;border-bottom:1px solid #d8d8d8;box-sizing:border-box"></div>
<div style="position:absolute;left:173px;top:387px;width:20px;height:20px;border:1px solid #c4c4c4;background:#fff;box-sizing:border-box"></div>
<div class="t " style="left:203.6px;top:389.55px;font-size:14px;color:#555;font-weight:400;">7 - 0</div>
<div class="t " style="left:308px;top:389.55px;font-size:14px;color:#555;font-weight:400;">Belkert</div>
<div style="position:absolute;left:302.5px;top:383px;width:1px;height:28px;background:#d8d8d8"></div>
<div style="position:absolute;left:435.5px;top:383px;width:1px;height:28px;background:#d8d8d8"></div>
<div style="position:absolute;left:488.5px;top:383px;width:1px;height:28px;background:#d8d8d8"></div>
<div style="position:absolute;left:197px;top:411px;width:401px;height:28px;background:#fff;border-bottom:1px solid #d8d8d8;box-sizing:border-box"></div>
<div style="position:absolute;left:171px;top:411px;width:26px;height:28px;background:#f4f4f4;border-bottom:1px solid #d8d8d8;box-sizing:border-box"></div>
<div style="position:absolute;left:173px;top:415px;width:20px;height:20px;border:1px solid #c4c4c4;background:#fff;box-sizing:border-box"></div>
<div class="t " style="left:203.6px;top:417.45px;font-size:14px;color:#555;font-weight:400;">8 - 1</div>
<div class="t " style="left:308px;top:417.45px;font-size:14px;color:#555;font-weight:400;">Alsórét1</div>
<div style="position:absolute;left:302.5px;top:411px;width:1px;height:28px;background:#d8d8d8"></div>
<div style="position:absolute;left:435.5px;top:411px;width:1px;height:28px;background:#d8d8d8"></div>
<div style="position:absolute;left:488.5px;top:411px;width:1px;height:28px;background:#d8d8d8"></div>
<div style="position:absolute;left:197px;top:439px;width:401px;height:28px;background:#e1eadc;border-bottom:1px solid #d8d8d8;box-sizing:border-box"></div>
<div style="position:absolute;left:171px;top:439px;width:26px;height:28px;background:#f4f4f4;border-bottom:1px solid #d8d8d8;box-sizing:border-box"></div>
<div style="position:absolute;left:173px;top:443px;width:20px;height:20px;border:1px solid #c4c4c4;background:#fff;box-sizing:border-box"></div>
<div class="t " style="left:203.6px;top:445.35px;font-size:14px;color:#555;font-weight:400;">8 - 2</div>
<div class="t " style="left:308px;top:445.35px;font-size:14px;color:#555;font-weight:400;">Alsórét2</div>
<div style="position:absolute;left:302.5px;top:439px;width:1px;height:28px;background:#d8d8d8"></div>
<div style="position:absolute;left:435.5px;top:439px;width:1px;height:28px;background:#d8d8d8"></div>
<div style="position:absolute;left:488.5px;top:439px;width:1px;height:28px;background:#d8d8d8"></div>
<div style="position:absolute;left:196.5px;top:216px;width:1px;height:251px;background:#cfcfcf"></div>
<div style="position:absolute;left:171px;top:1269px;width:427px;height:1px;background:#d8d8d8"></div>
<div style="position:absolute;left:201px;top:1274px;width:101px;height:32px;border:1px solid #d6d6d6;box-sizing:border-box;background:#fff"></div>
<div class="t " style="left:284.5px;top:1285.15px;font-size:14px;color:#555;font-weight:400;">9</div>
<div style="position:absolute;left:171px;top:1310px;width:427px;height:23px;background:#efefef;border-top:1px solid #dedede;box-sizing:border-box"></div>
<div style="position:absolute;left:194px;top:1311px;width:235px;height:22px;background:#dadada"></div>
<svg style="position:absolute;left:177px;top:1316px" width="8" height="10" viewBox="0 0 8 10"><path d="M7 1 V9 L1 5Z" fill="#666"/></svg>
<svg style="position:absolute;left:583px;top:1316px" width="8" height="10" viewBox="0 0 8 10"><path d="M1 1 V9 L7 5Z" fill="#666"/></svg>
<div style="position:absolute;left:621px;top:167px;width:1936px;height:1px;background:#d4d4d4"></div>
<svg style="position:absolute;left:639px;top:139px" width="20" height="20" viewBox="0 0 20 20"><path d="M1 10 L10 2 L19 10" fill="none" stroke="#333" stroke-width="2.2"/><path d="M4 10 L10 5 L16 10 V19 H12.5 V14 H7.5 V19 H4Z" fill="#333"/></svg>
<div class="t " style="left:672px;top:144.55px;font-size:14px;color:#333;font-weight:400;">Kezdőoldal</div>
<div style="position:absolute;left:750px;top:140px;width:18px;height:19px;border:1px solid #bfbfbf;box-sizing:border-box;background:#fff"></div>
<svg style="position:absolute;left:753px;top:143px" width="12" height="12" viewBox="0 0 12 12"><path d="M1.5 1.5 L10.5 10.5 M10.5 1.5 L1.5 10.5" stroke="#222" stroke-width="1.8"/></svg>
<svg style="position:absolute;left:782px;top:139px" width="20" height="20" viewBox="0 0 20 20"><path d="M10 1 L19 6 L10 11 L1 6Z" fill="#333"/><path d="M2 9 L10 13.5 L18 9 L19 10.5 L10 15.5 L1 10.5Z" fill="#333"/><path d="M2 13 L10 17.5 L18 13 L19 14.5 L10 19.5 L1 14.5Z" fill="#333"/></svg>
<div class="t " style="left:816px;top:144.55px;font-size:14px;color:#555;font-weight:400;">Grafikus áttekintés</div>
<div style="position:absolute;left:945px;top:140px;width:18px;height:19px;border:1px solid #bfbfbf;box-sizing:border-box;background:#fff"></div>
<svg style="position:absolute;left:948px;top:143px" width="12" height="12" viewBox="0 0 12 12"><path d="M1.5 1.5 L10.5 10.5 M10.5 1.5 L1.5 10.5" stroke="#222" stroke-width="1.8"/></svg>
<div style="position:absolute;left:968px;top:136px;width:163px;height:32px;background:#e0e0e0;border:1px solid #6a6a6a;border-top:2px solid #555;border-bottom:none;box-sizing:border-box"></div>
<div class="t " style="left:976px;top:144.55px;font-size:14px;color:#333;font-weight:400;">Gazdálkodási napló</div>
<div style="position:absolute;left:1110px;top:143px;width:16px;height:17px;background:#fafafa"></div>
<svg style="position:absolute;left:1112px;top:146px" width="12" height="12" viewBox="0 0 12 12"><path d="M1.5 1.5 L10.5 10.5 M10.5 1.5 L1.5 10.5" stroke="#222" stroke-width="2.2"/></svg>
<div style="position:absolute;left:606px;top:170px;width:1px;height:1175px;background:#d0d0d0"></div>
<div style="position:absolute;left:610px;top:293px;width:1940px;height:1px;background:#d0d0d0"></div>
<div style="position:absolute;left:668px;top:290.5px;width:712px;height:3.2px;background:#5b9e3c"></div>
<svg style="position:absolute;left:668.5px;top:233.5px" width="35.0" height="35.0" viewBox="0 0 35.0 35.0"><circle cx="17.5" cy="17.5" r="17.5" fill="#5b9e3c"/><path d="M7.35 17.5 L14.35 24.15 L26.6 9.625" fill="none" stroke="#fff" stroke-width="4.2" stroke-linecap="round" stroke-linejoin="round"/></svg>
<svg style="position:absolute;left:846.5px;top:233.5px" width="35.0" height="35.0" viewBox="0 0 35.0 35.0"><circle cx="17.5" cy="17.5" r="17.5" fill="#5b9e3c"/><path d="M7.35 17.5 L14.35 24.15 L26.6 9.625" fill="none" stroke="#fff" stroke-width="4.2" stroke-linecap="round" stroke-linejoin="round"/></svg>
<svg style="position:absolute;left:1000.5px;top:234.5px" width="35.0" height="35.0" viewBox="0 0 35.0 35.0"><circle cx="17.5" cy="17.5" r="17.5" fill="#5b9e3c"/><path d="M7.35 17.5 L14.35 24.15 L26.6 9.625" fill="none" stroke="#fff" stroke-width="4.2" stroke-linecap="round" stroke-linejoin="round"/></svg>
<svg style="position:absolute;left:1177px;top:231px" width="42" height="42" viewBox="0 0 42 42"><circle cx="21" cy="21" r="20" fill="none" stroke="#5b9e3c" stroke-width="1.3"/><circle cx="21" cy="21" r="17.5" fill="#5b9e3c"/><text x="21" y="27.5" font-family="Liberation Sans" font-size="18" text-anchor="middle" fill="#f0ffe8" stroke="#f0ffe8" stroke-width="0.5">4</text></svg>
<svg style="position:absolute;left:1379px;top:235px" width="37" height="37" viewBox="0 0 37 37"><circle cx="18.5" cy="18.5" r="17.5" fill="#fff" stroke="#888" stroke-width="1.3"/><text x="18.5" y="25" font-family="Liberation Sans" font-size="18" text-anchor="middle" fill="#555">5</text></svg>
<div class="t h" style="left:718px;top:241.22px;font-size:18.4px;color:#689a55;font-weight:400;">Általános</div>
<div class="t h" style="left:892px;top:241.62px;font-size:18.4px;color:#689a55;font-weight:400;">Táblák</div>
<div class="t h" style="left:1046px;top:241.62px;font-size:18.4px;color:#689a55;font-weight:400;">Törzsadatok</div>
<div class="t h" style="left:1224.6px;top:241.62px;font-size:18.4px;color:#689a55;font-weight:400;">Növények</div>
<div class="t h" style="left:1422.5px;top:242.62px;font-size:18.4px;color:#6a6a6a;font-weight:400;">Műveletek</div>
<div class="t h" style="left:672.5px;top:334.43px;font-size:34.7px;color:#111;font-weight:400;-webkit-text-stroke:0.4px #111;">Növények</div>
<div class="t h" style="left:675px;top:399.94px;font-size:18.5px;color:#111;font-weight:400;">Itt találja az egyes táblákhoz rendelt növényeket, és összepárosíthatja azokat az eGN rendszerben található növémyekkel.</div>
<div class="t h" style="left:675px;top:423.84px;font-size:18.5px;color:#111;font-weight:400;">A kijelölt növényeket a [Kijelölt növények beküldése] gombra kattintva küldheti be az eGN rendszerbe.</div>
<div style="position:absolute;left:672px;top:474px;width:240px;height:43px;border:1px solid #333;box-shadow:0 0 0 0.6px #333;border-radius:6px;box-sizing:border-box;background:#fff;overflow:hidden"><div style="position:absolute;left:205.5px;top:0;bottom:0;right:0;background:#ececec;border-left:1px solid #333;box-shadow:-0.6px 0 0 #333"></div></div>
<svg style="position:absolute;left:889.75px;top:492.0px" width="11" height="6" viewBox="0 0 11 6"><path d="M0 0 H11 L5.5 6Z" fill="#333"/></svg>
<div class="t h" style="left:684px;top:485.94px;font-size:18.5px;color:#222;font-weight:400;"><u>MgÜ</u></div>
<div style="position:absolute;left:950px;top:474px;width:240px;height:44px;border:1px solid #333;box-shadow:0 0 0 0.6px #333;border-radius:6px;box-sizing:border-box;background:#fff;overflow:hidden"><div style="position:absolute;left:205px;top:0;bottom:0;right:0;background:#ececec;border-left:1px solid #333;box-shadow:-0.6px 0 0 #333"></div></div>
<svg style="position:absolute;left:1167.5px;top:492.5px" width="11" height="6" viewBox="0 0 11 6"><path d="M0 0 H11 L5.5 6Z" fill="#333"/></svg>
<div class="t h" style="left:961.3px;top:486.14px;font-size:18.5px;color:#222;font-weight:400;">2023</div>
<div style="position:absolute;left:672px;top:542px;width:1660px;height:32px;background:#f5f5f5"></div>
<div class="t h" style="left:681.7px;top:551.34px;font-size:18.5px;color:#222;font-weight:400;">Ügyfél</div>
<div class="t h" style="left:765px;top:551.34px;font-size:18.5px;color:#222;font-weight:400;">Szám</div>
<div class="t h" style="left:835.3px;top:551.34px;font-size:18.5px;color:#222;font-weight:400;">Megnevezés</div>
<div class="t h" style="left:1005px;top:551.34px;font-size:18.5px;color:#222;font-weight:400;">Vetés típusa</div>
<div class="t h" style="left:1207.1px;top:551.34px;font-size:18.5px;color:#222;font-weight:400;">Hasznosítási kód</div>
<div class="t h" style="left:1387px;top:551.34px;font-size:18.5px;color:#222;font-weight:400;">Növény</div>
<div class="t h" style="left:1588.8px;top:551.34px;font-size:18.5px;color:#222;font-weight:400;">Ökológiai gazdálkodás</div>
<div class="t h" style="left:1806.6px;top:551.34px;font-size:18.5px;color:#222;font-weight:400;">eGN növény</div>
<div class="t h" style="left:2111.3px;top:551.34px;font-size:18.5px;color:#222;font-weight:400;">Növény beküldése az eGN-be</div>
<div class="t h" style="left:681px;top:594.62px;font-size:21px;color:#1a1a1a;font-weight:400;">MgÜ</div>
<div class="t h" style="left:769.6px;top:596.22px;font-size:21px;color:#1a1a1a;font-weight:400;">1-0</div>
<div class="t h" style="left:835.9px;top:596.22px;font-size:21px;color:#1a1a1a;font-weight:400;">Első tábla</div>
<div class="t h" style="left:681px;top:682.82px;font-size:21px;color:#1a1a1a;font-weight:400;">MgÜ</div>
<div class="t h" style="left:768.7px;top:682.82px;font-size:21px;color:#1a1a1a;font-weight:400;">2-0</div>
<div class="t h" style="left:835.8px;top:682.82px;font-size:21px;color:#1a1a1a;font-weight:400;">Dűlő</div>
<div class="t h" style="left:681px;top:711.72px;font-size:21px;color:#1a1a1a;font-weight:400;">MgÜ</div>
<div class="t h" style="left:768.7px;top:711.72px;font-size:21px;color:#1a1a1a;font-weight:400;">3-0</div>
<div class="t h" style="left:835.8px;top:711.72px;font-size:21px;color:#1a1a1a;font-weight:400;">Nagyerdő</div>
<div class="t h" style="left:681px;top:741.02px;font-size:21px;color:#1a1a1a;font-weight:400;">MgÜ</div>
<div class="t h" style="left:768.7px;top:741.02px;font-size:21px;color:#1a1a1a;font-weight:400;">4-0</div>
<div class="t h" style="left:835.8px;top:741.02px;font-size:21px;color:#1a1a1a;font-weight:400;">Kjsberek</div>
<div class="t h" style="left:681px;top:770.22px;font-size:21px;color:#1a1a1a;font-weight:400;">MgÜ</div>
<div class="t h" style="left:768.7px;top:770.22px;font-size:21px;color:#1a1a1a;font-weight:400;">5-0</div>
<div class="t h" style="left:835.8px;top:770.22px;font-size:21px;color:#1a1a1a;font-weight:400;">Belsőtó</div>
<div class="t h" style="left:681px;top:799.42px;font-size:21px;color:#1a1a1a;font-weight:400;">MgÜ</div>
<div class="t h" style="left:768.7px;top:799.42px;font-size:21px;color:#1a1a1a;font-weight:400;">6-0</div>
<div class="t h" style="left:835.8px;top:799.42px;font-size:21px;color:#1a1a1a;font-weight:400;">Kócsagos</div>
<div class="t h" style="left:681px;top:828.82px;font-size:21px;color:#1a1a1a;font-weight:400;">MgÜ</div>
<div class="t h" style="left:768.7px;top:828.82px;font-size:21px;color:#1a1a1a;font-weight:400;">7-0</div>
<div class="t h" style="left:835.8px;top:828.82px;font-size:21px;color:#1a1a1a;font-weight:400;">Belkert</div>
<div class="t h" style="left:681px;top:857.62px;font-size:21px;color:#1a1a1a;font-weight:400;">MgÜ</div>
<div class="t h" style="left:768.7px;top:857.62px;font-size:21px;color:#1a1a1a;font-weight:400;">8-1</div>
<div class="t h" style="left:835.8px;top:857.62px;font-size:21px;color:#1a1a1a;font-weight:400;">Alsórét1</div>
<div class="t h" style="left:681px;top:887.02px;font-size:21px;color:#1a1a1a;font-weight:400;">MgÜ</div>
<div class="t h" style="left:768.7px;top:887.02px;font-size:21px;color:#1a1a1a;font-weight:400;">8-2</div>
<div class="t h" style="left:835.8px;top:887.02px;font-size:21px;color:#1a1a1a;font-weight:400;">Alsórét2</div>
<div style="position:absolute;left:1004px;top:591px;width:169px;height:29px;border:1px solid #333;box-shadow:0 0 0 0.6px #333;border-radius:5px;box-sizing:border-box;background:#fff;overflow:hidden"><div class="t h" style="left:11px;top:7.84px;font-size:18.5px;color:#222">főnövény</div><div style="position:absolute;left:134px;top:0;bottom:0;right:0;background:#ececec;border-left:1px solid #333;box-shadow:-0.6px 0 0 #333"></div></div>
<svg style="position:absolute;left:1150.5px;top:601.5px" width="11" height="6" viewBox="0 0 11 6"><path d="M0 0 H11 L5.5 6Z" fill="#333"/></svg>
<div style="position:absolute;left:1210px;top:591px;width:128px;height:29px;border:1px solid #333;box-shadow:0 0 0 0.6px #333;border-radius:5px;box-sizing:border-box;background:#fff"></div>
<div class="t h" style="left:1222.5px;top:599.84px;font-size:18.5px;color:#222;font-weight:400;">KAL21</div>
<div style="position:absolute;left:1386px;top:591px;width:168px;height:29px;border:1px solid #333;box-shadow:0 0 0 0.6px #333;border-radius:5px;box-sizing:border-box;background:#fff;overflow:hidden"><div class="t h" style="left:11px;top:7.84px;font-size:18.5px;color:#222">Kukorica</div><div style="position:absolute;left:133.5px;top:0;bottom:0;right:0;background:#ececec;border-left:1px solid #333;box-shadow:-0.6px 0 0 #333"></div></div>
<svg style="position:absolute;left:1531.75px;top:601.5px" width="11" height="6" viewBox="0 0 11 6"><path d="M0 0 H11 L5.5 6Z" fill="#333"/></svg>
<div style="position:absolute;left:1635px;top:601px;width:20px;height:20px;border:2px solid #3a3a3a;border-radius:3px;box-sizing:border-box;background:#fff"></div>
<div style="position:absolute;left:1749px;top:595.3px;width:321px;height:28.5px;border:1px solid #333;box-shadow:0 0 0 0.6px #333;border-radius:5px;box-sizing:border-box;background:#fff;overflow:hidden"><div class="t h" style="left:11px;top:7.34px;font-size:18.5px;color:#222">Őszi búza (főnövény)</div><div style="position:absolute;left:286px;top:0;bottom:0;right:0;background:#ececec;border-left:1px solid #333;box-shadow:-0.6px 0 0 #333"></div></div>
<svg style="position:absolute;left:2047.5px;top:605.8px" width="11" height="6" viewBox="0 0 11 6"><path d="M0 0 H11 L5.5 6Z" fill="#333"/></svg>
<div style="position:absolute;left:2184.5px;top:606.6px;width:20px;height:20px;border:2px solid #3a3a3a;border-radius:3px;box-sizing:border-box;background:#fff"></div>
<div style="position:absolute;left:1004px;top:623.5px;width:169px;height:29px;border:1px solid #333;box-shadow:0 0 0 0.6px #333;border-radius:5px;box-sizing:border-box;background:#fff;overflow:hidden"><div class="t h" style="left:11px;top:7.84px;font-size:18.5px;color:#222">másodvetés</div><div style="position:absolute;left:134px;top:0;bottom:0;right:0;background:#ececec;border-left:1px solid #333;box-shadow:-0.6px 0 0 #333"></div></div>
<svg style="position:absolute;left:1150.5px;top:634.0px" width="11" height="6" viewBox="0 0 11 6"><path d="M0 0 H11 L5.5 6Z" fill="#333"/></svg>
<div style="position:absolute;left:1210px;top:623.5px;width:128px;height:29px;border:1px solid #333;box-shadow:0 0 0 0.6px #333;border-radius:5px;box-sizing:border-box;background:#fff"></div>
<div class="t h" style="left:1222.5px;top:632.34px;font-size:18.5px;color:#222;font-weight:400;">IND01</div>
<div style="position:absolute;left:1386px;top:623.5px;width:168px;height:29px;border:1px solid #333;box-shadow:0 0 0 0.6px #333;border-radius:5px;box-sizing:border-box;background:#fff;overflow:hidden"><div class="t h" style="left:11px;top:7.84px;font-size:18.5px;color:#222">Szójabab</div><div style="position:absolute;left:133.5px;top:0;bottom:0;right:0;background:#ececec;border-left:1px solid #333;box-shadow:-0.6px 0 0 #333"></div></div>
<svg style="position:absolute;left:1531.75px;top:634.0px" width="11" height="6" viewBox="0 0 11 6"><path d="M0 0 H11 L5.5 6Z" fill="#333"/></svg>
<div style="position:absolute;left:1635px;top:629px;width:20px;height:20px;border:2px solid #3a3a3a;border-radius:3px;box-sizing:border-box;background:#fff"></div>
<div style="position:absolute;left:1749px;top:627.8px;width:321px;height:28.5px;border:1px solid #333;box-shadow:0 0 0 0.6px #333;border-radius:5px;box-sizing:border-box;background:#fff;overflow:hidden"><div class="t h" style="left:11px;top:7.34px;font-size:18.5px;color:#222">Szójabab (másodvetés)</div><div style="position:absolute;left:286px;top:0;bottom:0;right:0;background:#ececec;border-left:1px solid #333;box-shadow:-0.6px 0 0 #333"></div></div>
<svg style="position:absolute;left:2047.5px;top:638.3px" width="11" height="6" viewBox="0 0 11 6"><path d="M0 0 H11 L5.5 6Z" fill="#333"/></svg>
<div style="position:absolute;left:2184.5px;top:632.3px;width:20px;height:20px;border:2px solid #3a3a3a;border-radius:3px;box-sizing:border-box;background:#fff"></div>
<div style="position:absolute;left:1004px;top:681.5px;width:169px;height:29px;border:1px solid #333;box-shadow:0 0 0 0.6px #333;border-radius:5px;box-sizing:border-box;background:#fff;overflow:hidden"><div class="t h" style="left:11px;top:7.84px;font-size:18.5px;color:#222">főnövény</div><div style="position:absolute;left:134px;top:0;bottom:0;right:0;background:#ececec;border-left:1px solid #333;box-shadow:-0.6px 0 0 #333"></div></div>
<svg style="position:absolute;left:1150.5px;top:692.0px" width="11" height="6" viewBox="0 0 11 6"><path d="M0 0 H11 L5.5 6Z" fill="#333"/></svg>
<div style="position:absolute;left:1210px;top:681.5px;width:128px;height:29px;border:1px solid #333;box-shadow:0 0 0 0.6px #333;border-radius:5px;box-sizing:border-box;background:#fff"></div>
<div class="t h" style="left:1222.5px;top:690.34px;font-size:18.5px;color:#222;font-weight:400;">KAL01</div>
<div style="position:absolute;left:1386px;top:681.5px;width:168px;height:29px;border:1px solid #333;box-shadow:0 0 0 0.6px #333;border-radius:5px;box-sizing:border-box;background:#fff;overflow:hidden"><div class="t h" style="left:11px;top:7.84px;font-size:18.5px;color:#222">Őszi búza</div><div style="position:absolute;left:133.5px;top:0;bottom:0;right:0;background:#ececec;border-left:1px solid #333;box-shadow:-0.6px 0 0 #333"></div></div>
<svg style="position:absolute;left:1531.75px;top:692.0px" width="11" height="6" viewBox="0 0 11 6"><path d="M0 0 H11 L5.5 6Z" fill="#333"/></svg>
<div style="position:absolute;left:1635px;top:687.9px;width:20px;height:20px;border:2px solid #3a3a3a;border-radius:3px;box-sizing:border-box;background:#fff"></div>
<svg style="position:absolute;left:1638px;top:690.9px" width="14" height="14" viewBox="0 0 14 14"><path d="M2 7.5 L5.5 12 L12.5 1.5" fill="none" stroke="#222" stroke-width="1.8"/></svg>
<div style="position:absolute;left:1749px;top:685.5px;width:321px;height:28.5px;border:1px solid #333;box-shadow:0 0 0 0.6px #333;border-radius:5px;box-sizing:border-box;background:#fff;overflow:hidden"><div class="t h" style="left:11px;top:7.34px;font-size:18.5px;color:#222">Őszi búza (főmövény) (ÖKO)</div><div style="position:absolute;left:286px;top:0;bottom:0;right:0;background:#ececec;border-left:1px solid #333;box-shadow:-0.6px 0 0 #333"></div></div>
<svg style="position:absolute;left:2047.5px;top:696.0px" width="11" height="6" viewBox="0 0 11 6"><path d="M0 0 H11 L5.5 6Z" fill="#333"/></svg>
<div style="position:absolute;left:2184.5px;top:689px;width:20px;height:20px;border:2px solid #3a3a3a;border-radius:3px;box-sizing:border-box;background:#fff"></div>
<div style="position:absolute;left:1004px;top:712.5px;width:169px;height:29px;border:1px solid #333;box-shadow:0 0 0 0.6px #333;border-radius:5px;box-sizing:border-box;background:#fff;overflow:hidden"><div class="t h" style="left:11px;top:7.84px;font-size:18.5px;color:#222">főnövény</div><div style="position:absolute;left:134px;top:0;bottom:0;right:0;background:#ececec;border-left:1px solid #333;box-shadow:-0.6px 0 0 #333"></div></div>
<svg style="position:absolute;left:1150.5px;top:723.0px" width="11" height="6" viewBox="0 0 11 6"><path d="M0 0 H11 L5.5 6Z" fill="#333"/></svg>
<div style="position:absolute;left:1210px;top:712.5px;width:128px;height:29px;border:1px solid #333;box-shadow:0 0 0 0.6px #333;border-radius:5px;box-sizing:border-box;background:#fff"></div>
<div class="t h" style="left:1222.5px;top:721.34px;font-size:18.5px;color:#222;font-weight:400;">KAL21</div>
<div style="position:absolute;left:1386px;top:712.5px;width:168px;height:29px;border:1px solid #333;box-shadow:0 0 0 0.6px #333;border-radius:5px;box-sizing:border-box;background:#fff;overflow:hidden"><div class="t h" style="left:11px;top:7.84px;font-size:18.5px;color:#222">Kukorica</div><div style="position:absolute;left:133.5px;top:0;bottom:0;right:0;background:#ececec;border-left:1px solid #333;box-shadow:-0.6px 0 0 #333"></div></div>
<svg style="position:absolute;left:1531.75px;top:723.0px" width="11" height="6" viewBox="0 0 11 6"><path d="M0 0 H11 L5.5 6Z" fill="#333"/></svg>
<div style="position:absolute;left:1635px;top:718.4px;width:20px;height:20px;border:2px solid #3a3a3a;border-radius:3px;box-sizing:border-box;background:#fff"></div>
<svg style="position:absolute;left:1638px;top:721.4px" width="14" height="14" viewBox="0 0 14 14"><path d="M2 7.5 L5.5 12 L12.5 1.5" fill="none" stroke="#222" stroke-width="1.8"/></svg>
<div style="position:absolute;left:1749px;top:716.5px;width:321px;height:28.5px;border:1px solid #333;box-shadow:0 0 0 0.6px #333;border-radius:5px;box-sizing:border-box;background:#fff;overflow:hidden"><div class="t h" style="left:11px;top:7.34px;font-size:18.5px;color:#222">Kukorica (főnövény, ÖKO)</div><div style="position:absolute;left:286px;top:0;bottom:0;right:0;background:#ececec;border-left:1px solid #333;box-shadow:-0.6px 0 0 #333"></div></div>
<svg style="position:absolute;left:2047.5px;top:727.0px" width="11" height="6" viewBox="0 0 11 6"><path d="M0 0 H11 L5.5 6Z" fill="#333"/></svg>
<div style="position:absolute;left:2184.5px;top:714.8px;width:20px;height:20px;border:2px solid #3a3a3a;border-radius:3px;box-sizing:border-box;background:#fff"></div>
<div style="position:absolute;left:1004px;top:743px;width:169px;height:29px;border:1px solid #333;box-shadow:0 0 0 0.6px #333;border-radius:5px;box-sizing:border-box;background:#fff;overflow:hidden"><div class="t h" style="left:11px;top:7.84px;font-size:18.5px;color:#222">főnövény</div><div style="position:absolute;left:134px;top:0;bottom:0;right:0;background:#ececec;border-left:1px solid #333;box-shadow:-0.6px 0 0 #333"></div></div>
<svg style="position:absolute;left:1150.5px;top:753.5px" width="11" height="6" viewBox="0 0 11 6"><path d="M0 0 H11 L5.5 6Z" fill="#333"/></svg>
<div style="position:absolute;left:1210px;top:743px;width:128px;height:29px;border:1px solid #333;box-shadow:0 0 0 0.6px #333;border-radius:5px;box-sizing:border-box;background:#fff"></div>
<div class="t h" style="left:1222.5px;top:751.84px;font-size:18.5px;color:#222;font-weight:400;">KAL01</div>
<div style="position:absolute;left:1386px;top:743px;width:168px;height:29px;border:1px solid #333;box-shadow:0 0 0 0.6px #333;border-radius:5px;box-sizing:border-box;background:#fff;overflow:hidden"><div class="t h" style="left:11px;top:7.84px;font-size:18.5px;color:#222">Őszi búza</div><div style="position:absolute;left:133.5px;top:0;bottom:0;right:0;background:#ececec;border-left:1px solid #333;box-shadow:-0.6px 0 0 #333"></div></div>
<svg style="position:absolute;left:1531.75px;top:753.5px" width="11" height="6" viewBox="0 0 11 6"><path d="M0 0 H11 L5.5 6Z" fill="#333"/></svg>
<div style="position:absolute;left:1635px;top:747.6px;width:20px;height:20px;border:2px solid #3a3a3a;border-radius:3px;box-sizing:border-box;background:#fff"></div>
<div style="position:absolute;left:1749px;top:747.2px;width:321px;height:28.5px;border:1px solid #333;box-shadow:0 0 0 0.6px #333;border-radius:5px;box-sizing:border-box;background:#fff;overflow:hidden"><div class="t h" style="left:11px;top:7.34px;font-size:18.5px;color:#222"></div><div style="position:absolute;left:286px;top:0;bottom:0;right:0;background:#ececec;border-left:1px solid #333;box-shadow:-0.6px 0 0 #333"></div></div>
<svg style="position:absolute;left:2047.5px;top:757.7px" width="11" height="6" viewBox="0 0 11 6"><path d="M0 0 H11 L5.5 6Z" fill="#333"/></svg>
<div style="position:absolute;left:2184.5px;top:746.5px;width:20px;height:20px;border:2px solid #3a3a3a;border-radius:3px;box-sizing:border-box;background:#fff"></div>
<svg style="position:absolute;left:2187.5px;top:749.5px" width="14" height="14" viewBox="0 0 14 14"><path d="M2 7.5 L5.5 12 L12.5 1.5" fill="none" stroke="#222" stroke-width="1.8"/></svg>
<div style="position:absolute;left:1004px;top:772.5px;width:169px;height:29px;border:1px solid #333;box-shadow:0 0 0 0.6px #333;border-radius:5px;box-sizing:border-box;background:#fff;overflow:hidden"><div class="t h" style="left:11px;top:7.84px;font-size:18.5px;color:#222">főnövény</div><div style="position:absolute;left:134px;top:0;bottom:0;right:0;background:#ececec;border-left:1px solid #333;box-shadow:-0.6px 0 0 #333"></div></div>
<svg style="position:absolute;left:1150.5px;top:783.0px" width="11" height="6" viewBox="0 0 11 6"><path d="M0 0 H11 L5.5 6Z" fill="#333"/></svg>
<div style="position:absolute;left:1210px;top:772.5px;width:128px;height:29px;border:1px solid #333;box-shadow:0 0 0 0.6px #333;border-radius:5px;box-sizing:border-box;background:#fff"></div>
<div class="t h" style="left:1222.5px;top:781.34px;font-size:18.5px;color:#222;font-weight:400;">KAL01</div>
<div style="position:absolute;left:1386px;top:772.5px;width:168px;height:29px;border:1px solid #333;box-shadow:0 0 0 0.6px #333;border-radius:5px;box-sizing:border-box;background:#fff;overflow:hidden"><div class="t h" style="left:11px;top:7.84px;font-size:18.5px;color:#222">Őszi búza</div><div style="position:absolute;left:133.5px;top:0;bottom:0;right:0;background:#ececec;border-left:1px solid #333;box-shadow:-0.6px 0 0 #333"></div></div>
<svg style="position:absolute;left:1531.75px;top:783.0px" width="11" height="6" viewBox="0 0 11 6"><path d="M0 0 H11 L5.5 6Z" fill="#333"/></svg>
<div style="position:absolute;left:1635px;top:778.1px;width:20px;height:20px;border:2px solid #3a3a3a;border-radius:3px;box-sizing:border-box;background:#fff"></div>
<div style="position:absolute;left:1749px;top:776.5px;width:321px;height:28.5px;border:1px solid #333;box-shadow:0 0 0 0.6px #333;border-radius:5px;box-sizing:border-box;background:#fff;overflow:hidden"><div class="t h" style="left:11px;top:7.34px;font-size:18.5px;color:#222">Őszi búza (főnövény)</div><div style="position:absolute;left:286px;top:0;bottom:0;right:0;background:#ececec;border-left:1px solid #333;box-shadow:-0.6px 0 0 #333"></div></div>
<svg style="position:absolute;left:2047.5px;top:787.0px" width="11" height="6" viewBox="0 0 11 6"><path d="M0 0 H11 L5.5 6Z" fill="#333"/></svg>
<div style="position:absolute;left:2184.5px;top:779.3px;width:20px;height:20px;border:2px solid #3a3a3a;border-radius:3px;box-sizing:border-box;background:#fff"></div>
<div style="position:absolute;left:1004px;top:803px;width:169px;height:29px;border:1px solid #333;box-shadow:0 0 0 0.6px #333;border-radius:5px;box-sizing:border-box;background:#fff;overflow:hidden"><div class="t h" style="left:11px;top:7.84px;font-size:18.5px;color:#222">főnövény</div><div style="position:absolute;left:134px;top:0;bottom:0;right:0;background:#ececec;border-left:1px solid #333;box-shadow:-0.6px 0 0 #333"></div></div>
<svg style="position:absolute;left:1150.5px;top:813.5px" width="11" height="6" viewBox="0 0 11 6"><path d="M0 0 H11 L5.5 6Z" fill="#333"/></svg>
<div style="position:absolute;left:1210px;top:803px;width:128px;height:29px;border:1px solid #333;box-shadow:0 0 0 0.6px #333;border-radius:5px;box-sizing:border-box;background:#fff"></div>
<div class="t h" style="left:1222.5px;top:811.84px;font-size:18.5px;color:#222;font-weight:400;">CUK01</div>
<div style="position:absolute;left:1386px;top:803px;width:168px;height:29px;border:1px solid #333;box-shadow:0 0 0 0.6px #333;border-radius:5px;box-sizing:border-box;background:#fff;overflow:hidden"><div class="t h" style="left:11px;top:7.84px;font-size:18.5px;color:#222">Cukorrépa</div><div style="position:absolute;left:133.5px;top:0;bottom:0;right:0;background:#ececec;border-left:1px solid #333;box-shadow:-0.6px 0 0 #333"></div></div>
<svg style="position:absolute;left:1531.75px;top:813.5px" width="11" height="6" viewBox="0 0 11 6"><path d="M0 0 H11 L5.5 6Z" fill="#333"/></svg>
<div style="position:absolute;left:1635px;top:808.6px;width:20px;height:20px;border:2px solid #3a3a3a;border-radius:3px;box-sizing:border-box;background:#fff"></div>
<svg style="position:absolute;left:1638px;top:811.6px" width="14" height="14" viewBox="0 0 14 14"><path d="M2 7.5 L5.5 12 L12.5 1.5" fill="none" stroke="#222" stroke-width="1.8"/></svg>
<div style="position:absolute;left:1749px;top:807.4px;width:321px;height:28.5px;border:1px solid #333;box-shadow:0 0 0 0.6px #333;border-radius:5px;box-sizing:border-box;background:#fff;overflow:hidden"><div class="t h" style="left:11px;top:7.34px;font-size:18.5px;color:#222">Őszi búza (főnövény, ÖKO)</div><div style="position:absolute;left:286px;top:0;bottom:0;right:0;background:#ececec;border-left:1px solid #333;box-shadow:-0.6px 0 0 #333"></div></div>
<svg style="position:absolute;left:2047.5px;top:817.9px" width="11" height="6" viewBox="0 0 11 6"><path d="M0 0 H11 L5.5 6Z" fill="#333"/></svg>
<div style="position:absolute;left:2184.5px;top:812.1px;width:20px;height:20px;border:2px solid #3a3a3a;border-radius:3px;box-sizing:border-box;background:#fff"></div>
<div style="position:absolute;left:1004px;top:833.5px;width:169px;height:29px;border:1px solid #333;box-shadow:0 0 0 0.6px #333;border-radius:5px;box-sizing:border-box;background:#fff;overflow:hidden"><div class="t h" style="left:11px;top:7.84px;font-size:18.5px;color:#222">főnövény</div><div style="position:absolute;left:134px;top:0;bottom:0;right:0;background:#ececec;border-left:1px solid #333;box-shadow:-0.6px 0 0 #333"></div></div>
<svg style="position:absolute;left:1150.5px;top:844.0px" width="11" height="6" viewBox="0 0 11 6"><path d="M0 0 H11 L5.5 6Z" fill="#333"/></svg>
<div style="position:absolute;left:1210px;top:833.5px;width:128px;height:29px;border:1px solid #333;box-shadow:0 0 0 0.6px #333;border-radius:5px;box-sizing:border-box;background:#fff"></div>
<div class="t h" style="left:1222.5px;top:842.34px;font-size:18.5px;color:#222;font-weight:400;">KAL01</div>
<div style="position:absolute;left:1386px;top:833.5px;width:168px;height:29px;border:1px solid #333;box-shadow:0 0 0 0.6px #333;border-radius:5px;box-sizing:border-box;background:#fff;overflow:hidden"><div class="t h" style="left:11px;top:7.84px;font-size:18.5px;color:#222">Őszi búza</div><div style="position:absolute;left:133.5px;top:0;bottom:0;right:0;background:#ececec;border-left:1px solid #333;box-shadow:-0.6px 0 0 #333"></div></div>
<svg style="position:absolute;left:1531.75px;top:844.0px" width="11" height="6" viewBox="0 0 11 6"><path d="M0 0 H11 L5.5 6Z" fill="#333"/></svg>
<div style="position:absolute;left:1635px;top:839px;width:20px;height:20px;border:2px solid #3a3a3a;border-radius:3px;box-sizing:border-box;background:#fff"></div>
<svg style="position:absolute;left:1638px;top:842px" width="14" height="14" viewBox="0 0 14 14"><path d="M2 7.5 L5.5 12 L12.5 1.5" fill="none" stroke="#222" stroke-width="1.8"/></svg>
<div style="position:absolute;left:1749px;top:837.4px;width:321px;height:28.5px;border:1px solid #333;box-shadow:0 0 0 0.6px #333;border-radius:5px;box-sizing:border-box;background:#fff;overflow:hidden"><div class="t h" style="left:11px;top:7.34px;font-size:18.5px;color:#222"></div><div style="position:absolute;left:286px;top:0;bottom:0;right:0;background:#ececec;border-left:1px solid #333;box-shadow:-0.6px 0 0 #333"></div></div>
<svg style="position:absolute;left:2047.5px;top:847.9px" width="11" height="6" viewBox="0 0 11 6"><path d="M0 0 H11 L5.5 6Z" fill="#333"/></svg>
<div style="position:absolute;left:2184.5px;top:846px;width:20px;height:20px;border:2px solid #3a3a3a;border-radius:3px;box-sizing:border-box;background:#fff"></div>
<svg style="position:absolute;left:2187.5px;top:849px" width="14" height="14" viewBox="0 0 14 14"><path d="M2 7.5 L5.5 12 L12.5 1.5" fill="none" stroke="#222" stroke-width="1.8"/></svg>
<div style="position:absolute;left:1004px;top:864px;width:169px;height:29px;border:1px solid #333;box-shadow:0 0 0 0.6px #333;border-radius:5px;box-sizing:border-box;background:#fff;overflow:hidden"><div class="t h" style="left:11px;top:7.84px;font-size:18.5px;color:#222">főnövény</div><div style="position:absolute;left:134px;top:0;bottom:0;right:0;background:#ececec;border-left:1px solid #333;box-shadow:-0.6px 0 0 #333"></div></div>
<svg style="position:absolute;left:1150.5px;top:874.5px" width="11" height="6" viewBox="0 0 11 6"><path d="M0 0 H11 L5.5 6Z" fill="#333"/></svg>
<div style="position:absolute;left:1210px;top:864px;width:128px;height:29px;border:1px solid #333;box-shadow:0 0 0 0.6px #333;border-radius:5px;box-sizing:border-box;background:#fff"></div>
<div class="t h" style="left:1222.5px;top:872.84px;font-size:18.5px;color:#222;font-weight:400;">KAL01</div>
<div style="position:absolute;left:1386px;top:864px;width:168px;height:29px;border:1px solid #333;box-shadow:0 0 0 0.6px #333;border-radius:5px;box-sizing:border-box;background:#fff;overflow:hidden"><div class="t h" style="left:11px;top:7.84px;font-size:18.5px;color:#222">Őszi búza</div><div style="position:absolute;left:133.5px;top:0;bottom:0;right:0;background:#ececec;border-left:1px solid #333;box-shadow:-0.6px 0 0 #333"></div></div>
<svg style="position:absolute;left:1531.75px;top:874.5px" width="11" height="6" viewBox="0 0 11 6"><path d="M0 0 H11 L5.5 6Z" fill="#333"/></svg>
<div style="position:absolute;left:1635px;top:869px;width:20px;height:20px;border:2px solid #3a3a3a;border-radius:3px;box-sizing:border-box;background:#fff"></div>
<div style="position:absolute;left:1749px;top:868.3px;width:321px;height:28.5px;border:1px solid #333;box-shadow:0 0 0 0.6px #333;border-radius:5px;box-sizing:border-box;background:#fff;overflow:hidden"><div class="t h" style="left:11px;top:7.34px;font-size:18.5px;color:#222">Őszi búza (főnövény)</div><div style="position:absolute;left:286px;top:0;bottom:0;right:0;background:#ececec;border-left:1px solid #333;box-shadow:-0.6px 0 0 #333"></div></div>
<svg style="position:absolute;left:2047.5px;top:878.8px" width="11" height="6" viewBox="0 0 11 6"><path d="M0 0 H11 L5.5 6Z" fill="#333"/></svg>
<div style="position:absolute;left:2184.5px;top:871.4px;width:20px;height:20px;border:2px solid #3a3a3a;border-radius:3px;box-sizing:border-box;background:#fff"></div>
<div style="position:absolute;left:1004px;top:893.5px;width:169px;height:29px;border:1px solid #333;box-shadow:0 0 0 0.6px #333;border-radius:5px;box-sizing:border-box;background:#fff;overflow:hidden"><div class="t h" style="left:11px;top:7.84px;font-size:18.5px;color:#222">főnövény</div><div style="position:absolute;left:134px;top:0;bottom:0;right:0;background:#ececec;border-left:1px solid #333;box-shadow:-0.6px 0 0 #333"></div></div>
<svg style="position:absolute;left:1150.5px;top:904.0px" width="11" height="6" viewBox="0 0 11 6"><path d="M0 0 H11 L5.5 6Z" fill="#333"/></svg>
<div style="position:absolute;left:1210px;top:893.5px;width:128px;height:29px;border:1px solid #333;box-shadow:0 0 0 0.6px #333;border-radius:5px;box-sizing:border-box;background:#fff"></div>
<div class="t h" style="left:1222.5px;top:902.34px;font-size:18.5px;color:#222;font-weight:400;">KAL01</div>
<div style="position:absolute;left:1386px;top:893.5px;width:168px;height:29px;border:1px solid #333;box-shadow:0 0 0 0.6px #333;border-radius:5px;box-sizing:border-box;background:#fff;overflow:hidden"><div class="t h" style="left:11px;top:7.84px;font-size:18.5px;color:#222">Őszi búza</div><div style="position:absolute;left:133.5px;top:0;bottom:0;right:0;background:#ececec;border-left:1px solid #333;box-shadow:-0.6px 0 0 #333"></div></div>
<svg style="position:absolute;left:1531.75px;top:904.0px" width="11" height="6" viewBox="0 0 11 6"><path d="M0 0 H11 L5.5 6Z" fill="#333"/></svg>
<div style="position:absolute;left:1635px;top:898.8px;width:20px;height:20px;border:2px solid #3a3a3a;border-radius:3px;box-sizing:border-box;background:#fff"></div>
<div style="position:absolute;left:1752px;top:897.2px;width:321px;height:28.5px;border:1px solid #333;box-shadow:0 0 0 0.6px #333;border-radius:5px;box-sizing:border-box;background:#fff;overflow:hidden"><div class="t h" style="left:11px;top:7.34px;font-size:18.5px;color:#222">Őszi búza (főnövény)</div><div style="position:absolute;left:286px;top:0;bottom:0;right:0;background:#ececec;border-left:1px solid #333;box-shadow:-0.6px 0 0 #333"></div></div>
<svg style="position:absolute;left:2050.5px;top:907.7px" width="11" height="6" viewBox="0 0 11 6"><path d="M0 0 H11 L5.5 6Z" fill="#333"/></svg>
<div style="position:absolute;left:2184.5px;top:900.5px;width:20px;height:20px;border:2px solid #3a3a3a;border-radius:3px;box-sizing:border-box;background:#fff"></div>
<div style="position:absolute;left:1004px;top:924px;width:169px;height:29px;border:1px solid #333;box-shadow:0 0 0 0.6px #333;border-radius:5px;box-sizing:border-box;background:#fff;overflow:hidden"><div class="t h" style="left:11px;top:7.84px;font-size:18.5px;color:#222">ökológiai jelentőségű</div><div style="position:absolute;left:134px;top:0;bottom:0;right:0;background:#ececec;border-left:1px solid #333;box-shadow:-0.6px 0 0 #333"></div></div>
<svg style="position:absolute;left:1150.5px;top:934.5px" width="11" height="6" viewBox="0 0 11 6"><path d="M0 0 H11 L5.5 6Z" fill="#333"/></svg>
<div style="position:absolute;left:1210px;top:924px;width:128px;height:29px;border:1px solid #333;box-shadow:0 0 0 0.6px #333;border-radius:5px;box-sizing:border-box;background:#fff"></div>
<div class="t h" style="left:1222.5px;top:932.84px;font-size:18.5px;color:#222;font-weight:400;">FOR41</div>
<div style="position:absolute;left:1386px;top:924px;width:168px;height:29px;border:1px solid #333;box-shadow:0 0 0 0.6px #333;border-radius:5px;box-sizing:border-box;background:#fff;overflow:hidden"><div class="t h" style="left:11px;top:7.84px;font-size:18.5px;color:#222">Mézontófű (Facélia)</div><div style="position:absolute;left:133.5px;top:0;bottom:0;right:0;background:#ececec;border-left:1px solid #333;box-shadow:-0.6px 0 0 #333"></div></div>
<svg style="position:absolute;left:1531.75px;top:934.5px" width="11" height="6" viewBox="0 0 11 6"><path d="M0 0 H11 L5.5 6Z" fill="#333"/></svg>
<div style="position:absolute;left:1635px;top:929.3px;width:20px;height:20px;border:2px solid #3a3a3a;border-radius:3px;box-sizing:border-box;background:#fff"></div>
<div style="position:absolute;left:1749px;top:928.1px;width:321px;height:28.5px;border:1px solid #333;box-shadow:0 0 0 0.6px #333;border-radius:5px;box-sizing:border-box;background:#fff;overflow:hidden"><div class="t h" style="left:11px;top:7.34px;font-size:18.5px;color:#222">Mézontófű (Facélia) (ökológiai jelentőségű)</div><div style="position:absolute;left:286px;top:0;bottom:0;right:0;background:#ececec;border-left:1px solid #333;box-shadow:-0.6px 0 0 #333"></div></div>
<svg style="position:absolute;left:2047.5px;top:938.6px" width="11" height="6" viewBox="0 0 11 6"><path d="M0 0 H11 L5.5 6Z" fill="#333"/></svg>
<div style="position:absolute;left:2184.5px;top:930px;width:20px;height:20px;border:2px solid #3a3a3a;border-radius:3px;box-sizing:border-box;background:#fff"></div>
<div style="position:absolute;left:1004px;top:955px;width:169px;height:29px;border:1px solid #333;box-shadow:0 0 0 0.6px #333;border-radius:5px;box-sizing:border-box;background:#fff;overflow:hidden"><div class="t h" style="left:11px;top:7.84px;font-size:18.5px;color:#222">ökológiai jelentőségű</div><div style="position:absolute;left:134px;top:0;bottom:0;right:0;background:#ececec;border-left:1px solid #333;box-shadow:-0.6px 0 0 #333"></div></div>
<svg style="position:absolute;left:1150.5px;top:965.5px" width="11" height="6" viewBox="0 0 11 6"><path d="M0 0 H11 L5.5 6Z" fill="#333"/></svg>
<div style="position:absolute;left:1210px;top:955px;width:128px;height:29px;border:1px solid #333;box-shadow:0 0 0 0.6px #333;border-radius:5px;box-sizing:border-box;background:#fff"></div>
<div class="t h" style="left:1222.5px;top:963.84px;font-size:18.5px;color:#222;font-weight:400;">FOR09</div>
<div style="position:absolute;left:1386px;top:955px;width:168px;height:29px;border:1px solid #333;box-shadow:0 0 0 0.6px #333;border-radius:5px;box-sizing:border-box;background:#fff;overflow:hidden"><div class="t h" style="left:11px;top:7.84px;font-size:18.5px;color:#222">Vöröshere</div><div style="position:absolute;left:133.5px;top:0;bottom:0;right:0;background:#ececec;border-left:1px solid #333;box-shadow:-0.6px 0 0 #333"></div></div>
<svg style="position:absolute;left:1531.75px;top:965.5px" width="11" height="6" viewBox="0 0 11 6"><path d="M0 0 H11 L5.5 6Z" fill="#333"/></svg>
<div style="position:absolute;left:1635px;top:959.7px;width:20px;height:20px;border:2px solid #3a3a3a;border-radius:3px;box-sizing:border-box;background:#fff"></div>
<div style="position:absolute;left:1749px;top:958.6px;width:321px;height:28.5px;border:1px solid #333;box-shadow:0 0 0 0.6px #333;border-radius:5px;box-sizing:border-box;background:#fff;overflow:hidden"><div class="t h" style="left:11px;top:7.34px;font-size:18.5px;color:#222">Vöröshere (ökológiai jelentőségű)</div><div style="position:absolute;left:286px;top:0;bottom:0;right:0;background:#ececec;border-left:1px solid #333;box-shadow:-0.6px 0 0 #333"></div></div>
<svg style="position:absolute;left:2047.5px;top:969.1px" width="11" height="6" viewBox="0 0 11 6"><path d="M0 0 H11 L5.5 6Z" fill="#333"/></svg>
<div style="position:absolute;left:2184.5px;top:958.6px;width:20px;height:20px;border:2px solid #3a3a3a;border-radius:3px;box-sizing:border-box;background:#fff"></div>
<div style="position:absolute;left:1749px;top:898px;width:1.5px;height:27px;background:#333"></div>
<div style="position:absolute;left:2088px;top:1011px;width:281px;height:44px;border:1px solid #444;box-shadow:0 0 0 0.7px #444;border-radius:4px;box-sizing:border-box;background:#ececec"></div>
<div class="t h" style="left:2114.4px;top:1023.09px;font-size:18.5px;color:#222;font-weight:400;">Kijelölt növények beküldése</div>
<div style="position:absolute;left:607px;top:1251px;width:1946px;height:94px;background:#f5f5f5"></div>
<div style="position:absolute;left:625px;top:1345px;width:1928px;height:2px;background:#b6b6ba"></div>
<div style="position:absolute;left:653px;top:1276px;width:161px;height:43px;border:1px solid #444;box-shadow:0 0 0 0.7px #444;border-radius:4px;box-sizing:border-box;background:#ececec"></div>
<div class="t h" style="left:706.5px;top:1288.34px;font-size:18.5px;color:#222;font-weight:400;">Vissza</div>
<div style="position:absolute;left:2348px;top:1276px;width:161px;height:43px;border:1px solid #4a7f34;box-shadow:0 0 0 0.5px #4a7f34;border-radius:4px;box-sizing:border-box;background:#5b9e3c"></div>
<div class="t h" style="left:2398px;top:1288.34px;font-size:18.5px;color:#f4fff0;font-weight:400;">Tovább</div>
<div style="position:absolute;left:0px;top:1384px;width:2560px;height:3px;background:#e4f4dc"></div>
<div style="position:absolute;left:0px;top:1386px;width:2560px;height:2px;background:#e8e8ea"></div>
<div style="position:absolute;left:5px;top:1350.5px;width:2552px;height:33.3px;background:#5b9e3c;border-top:1px solid #6a9a50;border-bottom:1px solid #6a9a50;box-sizing:border-box"></div>
<div style="position:absolute;left:540px;top:1351px;width:1px;height:33px;background:#4a8a30"></div>
<div style="position:absolute;left:663.7px;top:1351px;width:1px;height:33px;background:#4a8a30"></div>
<div style="position:absolute;left:800.5px;top:1351px;width:1px;height:33px;background:#4a8a30"></div>
<div style="position:absolute;left:951.9px;top:1351px;width:1px;height:33px;background:#4a8a30"></div>
<div style="position:absolute;left:1140.5px;top:1351px;width:1px;height:33px;background:#4a8a30"></div>
<div class="t " style="left:9.5px;top:1362.15px;font-size:14px;color:#d9f5c9;font-weight:400;">545755,044; 113933,072</div>
<div class="t " style="left:193px;top:1362.15px;font-size:14px;color:#d9f5c9;font-weight:400;">(EOVHUN/EOV/HD-72)</div>
<div class="t " style="left:545px;top:1362.15px;font-size:14px;color:#d9f5c9;font-weight:400;">1 :&nbsp; 3954</div>
</body></html>
